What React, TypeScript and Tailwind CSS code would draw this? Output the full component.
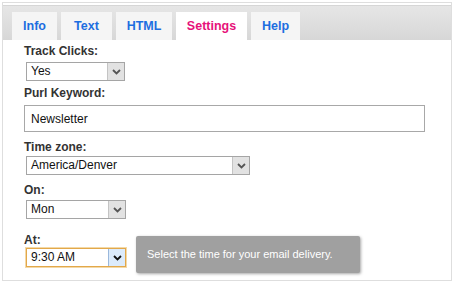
import { ReactNode } from "react"

const tabs = [
  { name: "Info", w: "w-[45px]" },
  { name: "Text", w: "w-[51px]" },
  { name: "HTML", w: "w-[56px]" },
  { name: "Settings", w: "w-[71px]" },
  { name: "Help", w: "w-[49px]" },
]

function Chevron({ dark }: { dark?: boolean }) {
  return (
    <svg width="9" height="6" viewBox="0 0 9 6">
      <path d="M1 1 L4.5 4.5 L8 1" fill="none" stroke={dark ? "#111" : "#555"} strokeWidth="1.8" />
    </svg>
  )
}

function Select({ value, width, focused }: { value: string; width: string; focused?: boolean }) {
  return (
    <div
      className={`flex h-[19px] items-stretch border bg-white ${width} ${
        focused ? "border-[#e3a84a] shadow-[0_0_0_1px_#f3d9a8]" : "border-[#a5a5a5]"
      }`}
    >
      <span className="flex-1 pl-[4px] text-[12px] leading-[17px] text-[#111]">{value}</span>
      <span
        className={`flex w-[17px] items-center justify-center border-l ${
          focused ? "border-[#9ab8dc] bg-[#dcebfb]" : "border-[#c4c4c4] bg-[#e2e2e2]"
        }`}
      >
        <Chevron dark={focused} />
      </span>
    </div>
  )
}

function Label({ children, mt }: { children: ReactNode; mt: string }) {
  return <div className={`${mt} text-[12px] font-bold leading-[14px] text-[#333]`}>{children}</div>
}

export default function App() {
  return (
    <div className="h-[282px] w-[453px] bg-white pl-[2px] pt-[2px] font-['Liberation_Sans',Arial,sans-serif]">
      <div className="h-[279px] w-[450px] border border-[#dedede] pt-[2px]">
        <div className="flex h-[35px] items-end gap-[4px] border-t border-[#d6d6d6] bg-gradient-to-b from-[#e6e6e6] to-[#d7d7d7] pl-[9px]">
          {tabs.map((t) => (
            <div
              key={t.name}
              className={`flex h-[28px] items-center justify-center text-[12.5px] font-bold ${t.w} ${
                t.name === "Settings" ? "bg-white text-[#e6127a]" : "bg-[#f5f5f5] text-[#1d6ee0]"
              }`}
            >
              {t.name}
            </div>
          ))}
        </div>
        <div className="pl-[21px]">
          <Label mt="mt-[4px]">Track Clicks:</Label>
          <div className="mt-[4px] pl-[2px]">
            <Select value="Yes" width="w-[99px]" />
          </div>
          <Label mt="mt-[5px]">Purl Keyword:</Label>
          <div className="mt-[5px] flex h-[27px] w-[401px] items-center border border-[#a8a8a8] pl-[6px] text-[12px] text-[#111]">
            Newsletter
          </div>
          <Label mt="mt-[8px]">Time zone:</Label>
          <div className="mt-[2px] pl-[2px]">
            <Select value="America/Denver" width="w-[224px]" />
          </div>
          <Label mt="mt-[8px]">On:</Label>
          <div className="mt-[3px] pl-[2px]">
            <Select value="Mon" width="w-[100px]" />
          </div>
          <div className="mt-[14px] flex items-start">
            <div>
              <Label mt="mt-0">At:</Label>
              <div className="mt-[1px] pl-[2px]">
                <Select value="9:30 AM" width="w-[100px]" focused />
              </div>
            </div>
            <div className="ml-[10px] mt-[3px] flex h-[37px] w-[224px] items-center rounded-[2px] bg-[#a0a0a0] pl-[11px] text-[11px] text-white shadow-[1px_1px_3px_rgba(0,0,0,0.35)]">
              Select the time for your email delivery.
            </div>
          </div>
        </div>
      </div>
    </div>
  )
}
